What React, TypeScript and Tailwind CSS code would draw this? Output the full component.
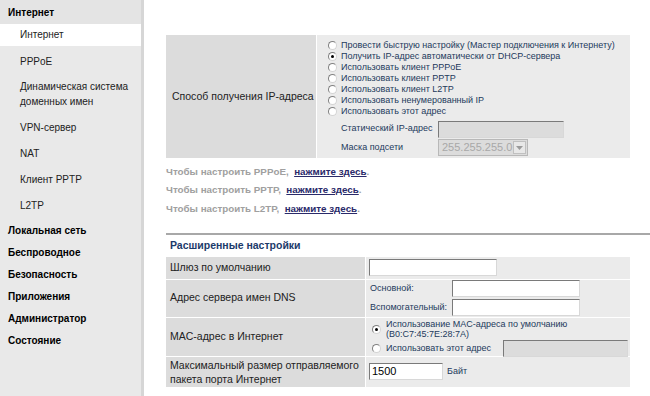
import React from "react";

const font = { fontFamily: '"Liberation Sans", Arial, sans-serif' };

function Radio({ checked = false }: { checked?: boolean }) {
  return (
    <span className="inline-flex h-[9px] w-[9px] shrink-0 items-center justify-center rounded-full border border-t-[#808080] border-l-[#808080] border-r-[#d4d4d4] border-b-[#d4d4d4] bg-white">
      {checked && <span className="h-[3px] w-[3px] rounded-full bg-black" />}
    </span>
  );
}

function TextBox({ w, value = "", disabled = false }: { w: string; value?: string; disabled?: boolean }) {
  return (
    <div
      className={`${w} h-[17px] shrink-0 border border-t-[#7a7a7a] border-l-[#7a7a7a] border-r-[#d8d8d8] border-b-[#d8d8d8] ${
        disabled ? "bg-[#dcdcdc]" : "bg-white"
      } pl-[2px] text-[11px] leading-[15px] text-black`}
    >
      {value}
    </div>
  );
}

const subItems = [
  { label: "PPPoE" },
  { label: "Динамическая система доменных имен", two: true },
  { label: "VPN-сервер" },
  { label: "NAT" },
  { label: "Клиент PPTP" },
  { label: "L2TP" },
];

const topItems = ["Локальная сеть", "Беспроводное", "Безопасность", "Приложения", "Администратор", "Состояние"];

const modes = [
  "Провести быструю настройку (Мастер подключения к Интернету)",
  "Получить IP-адрес автоматически от DHCP-сервера",
  "Использовать клиент PPPoE",
  "Использовать клиент PPTP",
  "Использовать клиент L2TP",
  "Использовать ненумерованный IP",
  "Использовать этот адрес",
];

function Sidebar() {
  return (
    <aside className="flex w-[144px] shrink-0 flex-col border-r-[3px] border-[#d6d6d6] bg-[#e9e9e9] pb-[40px]">
      <div className="flex h-[24px] items-center bg-[#e4e4e4] pl-[8px] text-[10px] font-bold text-black">Интернет</div>
      <div className="flex h-[22px] items-center bg-white pb-[1px] pl-[20px] text-[10px] text-[#222]">Интернет</div>
      <div className="mt-[2px] flex flex-col">
        {subItems.map((s) => (
          <div
            key={s.label}
            className={`flex items-center pl-[20px] pr-[10px] text-[10px] leading-[15px] text-[#222] ${
              s.two ? "h-[40px]" : "h-[26px]"
            }`}
          >
            {s.label}
          </div>
        ))}
      </div>
      <div className="mt-[1px] flex flex-col">
        {topItems.map((t) => (
          <div key={t} className="flex h-[22px] items-center pl-[8px] text-[10px] font-bold text-black">
            {t}
          </div>
        ))}
      </div>
    </aside>
  );
}

function Link({ proto }: { proto: string }) {
  return (
    <div className="flex h-[18.5px] items-center text-[9.8px] font-bold text-[#a0a0a0]">
      Чтобы настроить {proto},&nbsp;&nbsp;
      <span className="text-[#2a2a6a] underline">нажмите здесь</span>.
    </div>
  );
}

export default function App() {
  return (
    <div className="flex h-[396px] w-[650px] overflow-hidden bg-white" style={font}>
      <Sidebar />
      <main className="flex flex-1 flex-col pl-[22px] pt-[35px]">
        <div className="mr-[20px] flex bg-[#ebebeb]">
          <div className="flex w-[151px] shrink-0 items-center whitespace-nowrap border-r border-white bg-[#dcdcdc] pl-[6px] text-[10.5px] text-[#222]">
            Способ получения IP-адреса
          </div>
          <div className="flex flex-col pb-[1px] pt-[5px] pl-[11px] text-[9px] text-[#233a5c]">
            {modes.map((m, i) => (
              <div key={m} className="flex h-[11px] items-center gap-[4px]">
                <Radio checked={i === 1} />
                <span>{m}</span>
              </div>
            ))}
            <div className="mt-[3px] flex h-[18px] items-center pl-[13px]">
              <span className="w-[97px]">Статический IP-адрес</span>
              <TextBox w="w-[126px]" disabled />
            </div>
            <div className="flex h-[19px] items-center pl-[13px]">
              <span className="w-[97px]">Маска подсети</span>
              <div className="flex h-[17px] w-[90px] items-center border border-[#b8b8b8] bg-[#dcdcdc]">
                <span className="flex-1 pl-[3px] text-[11px] text-[#a8a8a8]">255.255.255.0</span>
                <span className="mr-[1px] flex h-[13px] w-[13px] items-center justify-center border border-[#c0c0c0] bg-[#e8e8e8]">
                  <svg width="7" height="4" viewBox="0 0 7 4">
                    <path d="M0 0h7L3.5 4z" fill="#9a9a9a" />
                  </svg>
                </span>
              </div>
            </div>
          </div>
        </div>

        <div className="mt-[5px] flex flex-col">
          <Link proto="PPPoE" />
          <Link proto="PPTP" />
          <Link proto="L2TP" />
        </div>

        <div className="mt-[14px] h-[2px] bg-[#a8a8a8]" />
        <div className="flex h-[22px] items-center pl-[4px] text-[10.5px] font-bold text-[#1c3a6a]">Расширенные настройки</div>

        <div className="mr-[20px] flex flex-col gap-[1px] text-[10.5px] text-[#222]">
          <div className="flex h-[22px] bg-[#ebebeb]">
            <div className="flex w-[200px] shrink-0 items-center border-r border-white bg-[#dcdcdc] pl-[4px]">Шлюз по умолчанию</div>
            <div className="flex items-center pl-[3px]">
              <TextBox w="w-[128px]" />
            </div>
          </div>
          <div className="flex h-[37px] bg-[#ebebeb]">
            <div className="flex w-[200px] shrink-0 items-center border-r border-white bg-[#dcdcdc] pl-[4px]">Адрес сервера имен DNS</div>
            <div className="flex flex-col justify-center gap-[1px] pl-[4px] text-[9px] text-[#233a5c]">
              <div className="flex h-[18px] items-center">
                <span className="w-[82px]">Основной:</span>
                <TextBox w="w-[128px]" />
              </div>
              <div className="flex h-[18px] items-center">
                <span className="w-[82px]">Вспомогательный:</span>
                <TextBox w="w-[128px]" />
              </div>
            </div>
          </div>
          <div className="flex h-[38px] bg-[#ebebeb]">
            <div className="flex w-[200px] shrink-0 items-center border-r border-white bg-[#dcdcdc] pl-[4px]">MAC-адрес в Интернет</div>
            <div className="flex flex-col pl-[6px] pt-[1px] text-[9px] leading-[10.5px] text-[#233a5c]">
              <div className="flex items-center gap-[5px]">
                <Radio checked />
                <span>
                  Использование MAC-адреса по умолчанию
                  <br />
                  (B0:C7:45:7E:28:7A)
                </span>
              </div>
              <div className="flex h-[17px] items-center gap-[5px]">
                <Radio />
                <span className="w-[112px]">Использовать этот адрес</span>
                <TextBox w="w-[125px]" disabled />
              </div>
            </div>
          </div>
          <div className="flex h-[30px] bg-[#ebebeb]">
            <div className="flex w-[200px] shrink-0 items-center border-r border-white bg-[#dcdcdc] pl-[4px] leading-[14px]">
              Максимальный размер отправляемого пакета порта Интернет
            </div>
            <div className="flex items-center gap-[4px] pl-[3px] text-[9px] text-[#233a5c]">
              <TextBox w="w-[74px]" value="1500" />
              <span>Байт</span>
            </div>
          </div>
        </div>
      </main>
    </div>
  );
}
